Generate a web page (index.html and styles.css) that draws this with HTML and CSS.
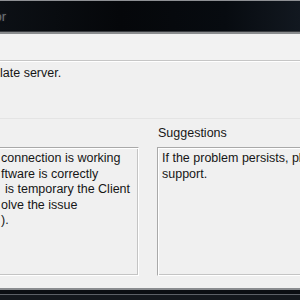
FILE: index.html
```html
<!DOCTYPE html>
<html lang="en">

<head>
  <meta charset="UTF-8" />
  <title>Client Updater Error</title>
  <link rel="stylesheet" href="styles.css">
</head>

<body>
  <div class="window">
    <div class="titlebar">
      <div class="title-clip">
        <span class="title">Client Updater Error</span>
      </div>
    </div>

    <div class="header"></div>
    <div class="etched"></div>

    <div class="message">
      <p>late server.</p>
    </div>
    <div class="faint"></div>

    <div class="panels">
      <div class="group group-left">
        <div class="label">Possible causes</div>
        <div class="box">
          <p>connection is working</p>
          <p>ftware is correctly</p>
          <p class="shift">is temporary the Client</p>
          <p>olve the issue</p>
          <p>).</p>
        </div>
      </div>
      <div class="group group-right">
        <div class="label">Suggestions</div>
        <div class="box">
          <p>If the problem persists, please contact</p>
          <p>support.</p>
        </div>
      </div>
    </div>

    <div class="taskbar"></div>
  </div>
</body>

</html>
```

FILE: styles.css
```css
* {
  box-sizing: border-box;
  margin: 0;
  padding: 0;
}

body {
  width: 300px;
  height: 300px;
  overflow: hidden;
  background: #f0f0f0;
  font-family: "Liberation Sans", Arial, sans-serif;
  font-size: 12.5px;
  color: #161616;
}

.window {
  display: flex;
  flex-direction: column;
  width: 300px;
  height: 300px;
  overflow: hidden;
}

.titlebar {
  height: 34px;
  flex-shrink: 0;
  background: linear-gradient(90deg, #0c1015 0%, #05070a 40%, #070b10 75%, #121820 100%);
  border-top: 1px solid #8e9094;
  border-bottom: 2px solid #8a8c8e;
  box-shadow: inset 0 -1px 0 #3a3d41;
  display: flex;
  align-items: center;
}

.title-clip {
  width: 6px;
  display: flex;
  justify-content: flex-end;
}

.title {
  white-space: nowrap;
  font-size: 13px;
  color: #6e7277;
  text-shadow: 0 0 3px #2a2e33;
}

.header {
  height: 26px;
  flex-shrink: 0;
  background: #f2f2f2;
}

.etched {
  height: 2px;
  flex-shrink: 0;
  border-top: 1px solid #c6c6c6;
  border-bottom: 1px solid #ffffff;
}

.message {
  height: 56px;
  flex-shrink: 0;
  padding-top: 4px;
  line-height: 15px;
}

.faint {
  height: 1px;
  flex-shrink: 0;
  background: #e4e4e4;
}

.panels {
  flex: 1;
  display: flex;
  gap: 18px;
  margin: 0 -20px;
  padding: 7px 0 12px;
}

.group {
  display: flex;
  flex-direction: column;
}

.group-left {
  width: 159px;
  flex-shrink: 0;
}

.group-right {
  flex: 1;
}

.label {
  line-height: 15px;
  margin-bottom: 6px;
  padding-left: 1px;
}

.group-left .label {
  visibility: hidden;
}

.box {
  flex: 1;
  border: 1px solid;
  border-color: #a9a9a9 #ffffff #ffffff #a9a9a9;
  box-shadow: inset 1px 1px 0 #ffffff, inset -1px -1px 0 #c4c4c4;
  padding: 3px 4px;
  line-height: 15.5px;
  white-space: nowrap;
  overflow: hidden;
}

.group-left .box {
  padding-left: 20px;
}

.box .shift {
  padding-left: 4px;
}

.taskbar {
  height: 12px;
  flex-shrink: 0;
  background: linear-gradient(180deg, #8a8c8f 0, #8a8c8f 2px, #0b0e12 2px, #0b0e12 6px, #5c6066 6px, #5c6066 7px, #14181d 7px);
}
```
